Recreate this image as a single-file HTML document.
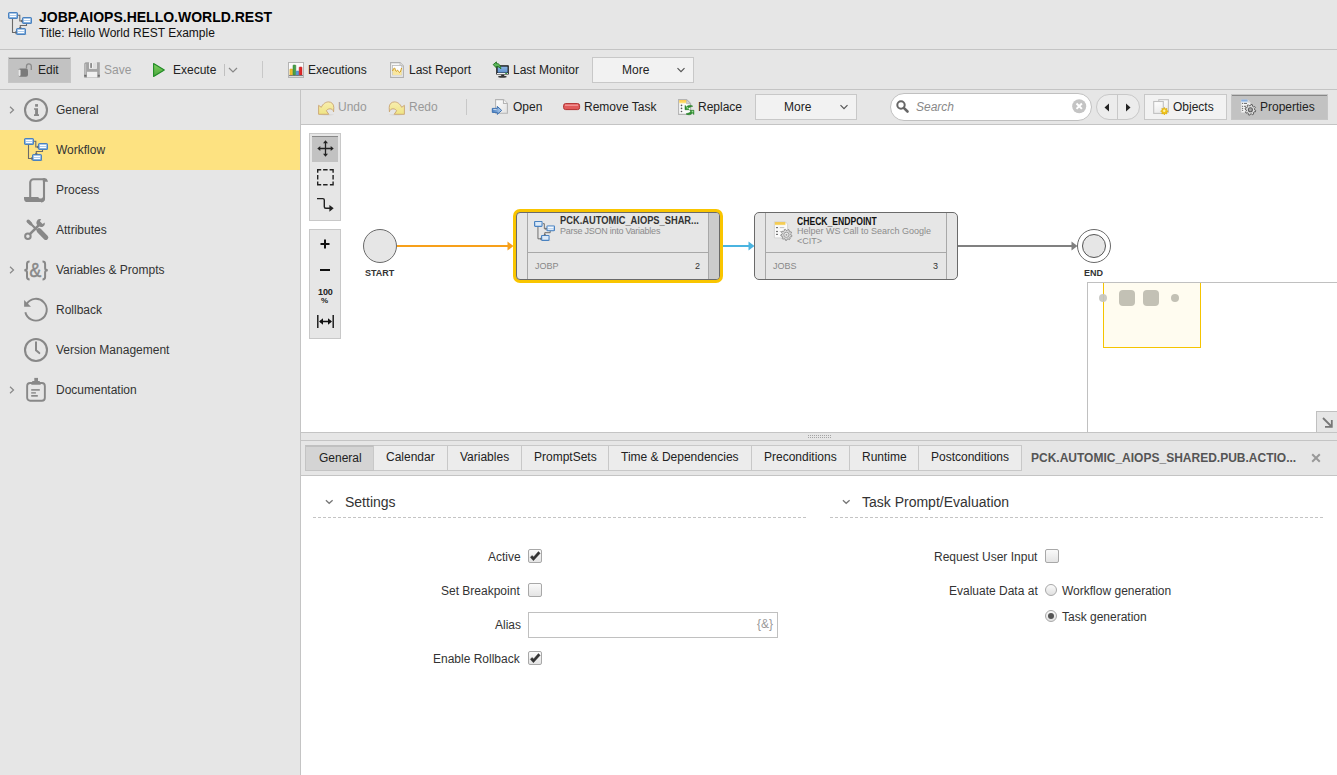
<!DOCTYPE html>
<html><head><meta charset="utf-8">
<style>
*{box-sizing:border-box;margin:0;padding:0}
html,body{width:1337px;height:775px;overflow:hidden;background:#e6e6e6;font-family:"Liberation Sans",sans-serif;font-size:12px;color:#333}
.a{position:absolute}
.t{position:absolute;white-space:nowrap;line-height:1}
svg.i{position:absolute;overflow:visible}
</style></head><body>
<svg width="0" height="0" style="position:absolute">
<defs>
<linearGradient id="bg1" x1="0" y1="0" x2="0" y2="1"><stop offset="0" stop-color="#d2e4f6"/><stop offset="1" stop-color="#8fb8e4"/></linearGradient>
<symbol id="wfbox" viewBox="0 0 10 7"><rect x="0.6" y="0.6" width="8.8" height="5.8" rx="1" fill="url(#bg1)" stroke="#4a82c0" stroke-width="1.2"/><rect x="2" y="2" width="6" height="1" fill="#fff"/><rect x="2" y="4" width="6" height="1" fill="#fff"/></symbol>
<symbol id="wf" viewBox="0 0 24 24">
<path d="M4.5 7v14.5H8.5 M10 4.2H11.8V10H14.5 M18.5 12.5V14.5H12.3V17" fill="none" stroke="#6a6a6a" stroke-width="1.1"/>
<ellipse cx="13" cy="23.3" rx="6" ry="0.7" fill="#000" opacity="0.12"/>
<use href="#wfbox" x="0" y="1" width="10" height="7"/>
<use href="#wfbox" x="14" y="6" width="10" height="7"/>
<use href="#wfbox" x="8" y="17" width="10" height="7"/>
<path d="M14.9 10L13 8.6V11.4Z M12.3 17.9L10.9 16H13.7Z M8.9 21.5L7 20.1V22.9Z" fill="#6a6a6a"/>
</symbol>
</defs></svg>

<!-- HEADER -->
<svg class="i" style="left:8px;top:11px" width="24" height="24"><use href="#wf"/></svg>
<div class="a" style="left:0;top:49px;width:1337px;height:1px;background:#c4c4c4"></div>
<div class="t" style="left:39px;top:10px;font-size:14px;font-weight:bold;color:#000">JOBP.AIOPS.HELLO.WORLD.REST</div>
<div class="t" style="left:39px;top:27px;font-size:12px;color:#111">Title: Hello World REST Example</div>

<!-- TOP TOOLBAR -->
<div class="a" style="left:8px;top:57px;width:63px;height:26px;background:#c2c2c2;border:1px solid #c6c6c6;box-shadow:inset 0 1px 0 #888"></div>
<svg class="i" style="left:17px;top:62px" width="16" height="16" viewBox="0 0 16 16">
<path d="M9.5 6.5V4.2a2.4 2.4 0 0 1 4.8 0V8" fill="none" stroke="#8a8a8a" stroke-width="1.3"/>
<rect x="1.3" y="6.5" width="9.7" height="8.3" rx="2" fill="#7a7a7a"/>
<rect x="1.3" y="7.5" width="2.2" height="6.5" rx="1" fill="#e8e8e8"/>
</svg>
<div class="t" style="left:38px;top:64px;color:#222">Edit</div>
<svg class="i" style="left:84px;top:62px" width="16" height="16" viewBox="0 0 16 16">
<path d="M1.6 0.2H15.8V15.8H0.2V1.6Z" fill="#a4a4a4"/>
<rect x="1" y="2" width="1.2" height="11" fill="#bdbdbd"/>
<rect x="5" y="0.2" width="7.9" height="6.6" fill="#f0f0f0"/>
<rect x="9" y="1" width="3.5" height="5" fill="#dedede"/>
<rect x="6.2" y="1.1" width="1.8" height="4.8" fill="#8a8a8a"/>
<rect x="3" y="9.8" width="10.2" height="5.6" fill="#f0f0f0"/>
<rect x="0.2" y="12.8" width="2.2" height="1.8" fill="#6a6a6a"/>
<rect x="13.8" y="12.8" width="2" height="1.8" fill="#6a6a6a"/>
</svg>
<div class="t" style="left:104px;top:64px;color:#999">Save</div>
<svg class="i" style="left:152px;top:62px" width="14" height="16" viewBox="0 0 14 16">
<defs><linearGradient id="pg" x1="0" y1="0" x2="0" y2="1"><stop offset="0" stop-color="#7fd060"/><stop offset="1" stop-color="#4aa63c"/></linearGradient></defs>
<path d="M1.6 1.5L12.3 8L1.6 14.5Z" fill="url(#pg)" stroke="#1f8a24" stroke-width="1.1" stroke-linejoin="round"/>
</svg>
<div class="t" style="left:173px;top:64px;color:#222">Execute</div>
<div class="a" style="left:224px;top:64px;width:1px;height:12px;background:#c0c0c0"></div>
<svg class="i" style="left:228px;top:67px" width="10" height="6" viewBox="0 0 10 6"><path d="M1 1l4 4 4-4" fill="none" stroke="#888" stroke-width="1.2"/></svg>
<div class="a" style="left:262px;top:61px;width:1px;height:17px;background:#c8c8c8"></div>
<svg class="i" style="left:288px;top:62px" width="16" height="16" viewBox="0 0 16 16">
<rect x="0.5" y="0.5" width="15" height="15" fill="#fafafa" stroke="#b4b4b4" stroke-width="1"/>
<rect x="1.9" y="7" width="2.8" height="6.2" rx="0.6" fill="#f0c030" stroke="#d8a010" stroke-width="0.5"/>
<rect x="5" y="3" width="2.8" height="10.2" rx="0.6" fill="#4aa048" stroke="#2f7e2e" stroke-width="0.5"/>
<rect x="8.1" y="9" width="2.8" height="4.2" rx="0.6" fill="#5a9ad8" stroke="#3a76b8" stroke-width="0.5"/>
<rect x="11.2" y="5" width="2.8" height="8.2" rx="0.6" fill="#e02828" stroke="#b01818" stroke-width="0.5"/>
<rect x="1" y="13.2" width="14" height="1" fill="#666"/>
</svg>
<div class="t" style="left:308px;top:64px;color:#222">Executions</div>
<svg class="i" style="left:390px;top:62px" width="16" height="16" viewBox="0 0 16 16">
<path d="M0.6 0.6H10L13.4 4V15.4H0.6Z" fill="#f6f6f6" stroke="#b0b0b0" stroke-width="1.1"/>
<path d="M10 0.6V4H13.4" fill="#e0e0e0" stroke="#b8b8b8" stroke-width="0.8"/>
<rect x="2.4" y="3.4" width="9.4" height="9.6" fill="#fdfdfd" stroke="#b8b8b8" stroke-width="0.8"/>
<path d="M2.6 9C3.2 7.5 3.8 6 4.4 6C5.2 6 5.5 9.3 6.2 9.3C6.8 9.3 7 8.3 7.6 8.3C8.4 8.3 8.8 10.5 9.6 10.5C10.5 10.5 11 7.5 11.6 6V13H2.6Z" fill="#f8e6a0"/>
<path d="M2.6 9C3.2 7.5 3.8 6 4.4 6C5.2 6 5.5 9.3 6.2 9.3C6.8 9.3 7 8.3 7.6 8.3C8.4 8.3 8.8 10.5 9.6 10.5C10.5 10.5 11 7.5 11.6 6" fill="none" stroke="#d09a18" stroke-width="1"/>
</svg>
<div class="t" style="left:409px;top:64px;color:#222">Last Report</div>
<svg class="i" style="left:489px;top:57px" width="24" height="24" viewBox="0 0 24 24">
<defs><linearGradient id="sg" x1="0" y1="0" x2="0" y2="1"><stop offset="0" stop-color="#8cb6e6"/><stop offset="1" stop-color="#5f90cc"/></linearGradient></defs>
<rect x="7.2" y="8.2" width="12.6" height="9.4" rx="0.6" fill="#151515"/>
<rect x="8.6" y="9.6" width="10" height="6" fill="url(#sg)"/>
<rect x="8" y="16" width="11" height="1" fill="#f0f0f0"/>
<rect x="16.2" y="16" width="2" height="1" fill="#3aa040"/>
<rect x="12.2" y="17.6" width="3" height="1.6" fill="#333"/>
<ellipse cx="13.4" cy="19.7" rx="4.3" ry="1" fill="#3a3a3a"/>
<path d="M4.2 7.6L7.4 4.9V6.5C10 6.5 11.5 8 11.8 11.8C10.8 10.2 9.5 9.6 7.4 9.6V10.9Z" fill="#5cb85a" stroke="#1e6e1e" stroke-width="0.9" stroke-linejoin="round"/>
</svg>
<div class="t" style="left:513px;top:64px;color:#222">Last Monitor</div>
<div class="a" style="left:592px;top:57px;width:102px;height:26px;background:#f2f2f2;border:1px solid #c8c8c8"></div>
<div class="t" style="left:622px;top:64px;color:#222">More</div>
<svg class="i" style="left:676px;top:67px" width="10" height="6" viewBox="0 0 10 6"><path d="M1.5 1.2l3.5 3.5 3.5-3.5" fill="none" stroke="#555" stroke-width="1.2"/></svg>
<div class="a" style="left:0;top:89px;width:1337px;height:1px;background:#c4c4c4"></div>

<!-- SIDEBAR -->
<div class="a" style="left:0;top:130px;width:300px;height:40px;background:#fde281"></div>
<div class="a" style="left:300px;top:90px;width:1px;height:685px;background:#c4c4c4"></div>
<!-- chevrons -->
<svg class="i" style="left:9px;top:106px" width="6" height="8" viewBox="0 0 6 8"><path d="M1 0.8l3.5 3.2L1 7.2" fill="none" stroke="#888" stroke-width="1.2"/></svg>
<svg class="i" style="left:9px;top:266px" width="6" height="8" viewBox="0 0 6 8"><path d="M1 0.8l3.5 3.2L1 7.2" fill="none" stroke="#888" stroke-width="1.2"/></svg>
<svg class="i" style="left:9px;top:386px" width="6" height="8" viewBox="0 0 6 8"><path d="M1 0.8l3.5 3.2L1 7.2" fill="none" stroke="#888" stroke-width="1.2"/></svg>
<!-- icons -->
<svg class="i" style="left:24px;top:98px" width="24" height="24" viewBox="0 0 24 24">
<circle cx="12" cy="12" r="11" fill="none" stroke="#888" stroke-width="2.1"/>
<rect x="11.1" y="6.1" width="2.9" height="2.6" fill="#888"/>
<path d="M10 10.3H14V16.2H15V17.9H10V16.2H11.1V11.7H10Z" fill="#888"/>
</svg>
<svg class="i" style="left:24px;top:137px" width="24" height="24"><use href="#wf"/></svg>
<svg class="i" style="left:24px;top:178px" width="24" height="24" viewBox="0 0 24 24">
<path d="M6.2 19.5V4.6A3.3 3.3 0 0 1 9.5 1.3H21" fill="none" stroke="#888" stroke-width="2.1"/>
<path d="M20 2V20.4A3 3 0 0 1 17 23.4" fill="none" stroke="#888" stroke-width="2.1"/>
<path d="M18.8 0.25H21.2Q23 0.25 24 3.7H18.8Z" fill="#888"/>
<path d="M0 19H14.2A2.6 2.6 0 0 0 19 19H21V20.6A3.4 3.4 0 0 1 17.6 24H3.6A3.6 3.6 0 0 1 0 20.4Z" fill="#888"/>
</svg>
<svg class="i" style="left:24px;top:218px" width="24" height="24" viewBox="0 0 24 24">
<path d="M4.2 3.2L12 11" stroke="#888" stroke-width="2.2" stroke-linecap="round"/>
<path d="M4.2 3.2L6.6 5.6" stroke="#888" stroke-width="3.4" stroke-linecap="round"/>
<path d="M15 12.6L21.8 19.4" stroke="#888" stroke-width="5" stroke-linecap="round"/>
<path d="M5.6 16.4L15.4 6.6" stroke="#888" stroke-width="2.6"/>
<circle cx="3.9" cy="18.2" r="2.75" fill="none" stroke="#888" stroke-width="2"/>
<path d="M14.6 7.6A3.4 3.4 0 0 1 17.2 1.3L15.9 3.3L18.6 6L20.6 4.6A3.4 3.4 0 0 1 14.6 7.6Z" fill="#888"/>
</svg>
<svg class="i" style="left:18px;top:252px" width="40" height="40" viewBox="0 0 40 40">
<path d="M11.6 9.6C9.8 9.6 9 10.3 9 12V16C9 17.3 8 18.2 6.3 18.2C8 18.2 9 19.1 9 20.4V25C9 26.7 9.8 27.4 11.6 27.4" fill="none" stroke="#888" stroke-width="2"/>
<path d="M24.5 9.6C26.3 9.6 27.1 10.3 27.1 12V16C27.1 17.3 28.1 18.2 29.8 18.2C28.1 18.2 27.1 19.1 27.1 20.4V25C27.1 26.7 26.3 27.4 24.5 27.4" fill="none" stroke="#888" stroke-width="2"/>
<text x="0" y="0" transform="translate(11.6 24.8) scale(0.88 1)" font-family="Liberation Sans" font-size="20" fill="#888" stroke="#888" stroke-width="0.5">&amp;</text>
</svg>
<svg class="i" style="left:24px;top:298px" width="24" height="24" viewBox="0 0 24 24">
<path d="M1.34 14.2A10.85 10.85 0 1 0 2.7 5.95" fill="none" stroke="#888" stroke-width="1.95"/>
<path d="M0.1 1.9V8.8H7Z" fill="#888"/>
</svg>
<svg class="i" style="left:24px;top:338px" width="24" height="24" viewBox="0 0 24 24">
<circle cx="12" cy="12" r="11" fill="none" stroke="#888" stroke-width="2.1"/>
<path d="M12 4.3V12.3L15.3 15.1" fill="none" stroke="#888" stroke-width="2" stroke-linecap="round"/>
</svg>
<svg class="i" style="left:24px;top:378px" width="24" height="24" viewBox="0 0 24 24">
<rect x="3.15" y="5.05" width="17.7" height="17.7" rx="3" fill="none" stroke="#888" stroke-width="1.9"/>
<rect x="10.3" y="-0.1" width="3.7" height="3.4" fill="#888"/>
<path d="M7.2 6.7L8.4 3H15.6L16.8 6.7Z" fill="#888"/>
<rect x="7.2" y="11.1" width="8.6" height="1.6" fill="#888"/>
<rect x="7.2" y="14.2" width="4.7" height="1.4" fill="#888"/>
<rect x="7.2" y="17" width="6.6" height="1.7" fill="#888"/>
</svg>
<div class="t" style="left:56px;top:104px">General</div>
<div class="t" style="left:56px;top:144px">Workflow</div>
<div class="t" style="left:56px;top:184px">Process</div>
<div class="t" style="left:56px;top:224px">Attributes</div>
<div class="t" style="left:56px;top:264px">Variables &amp; Prompts</div>
<div class="t" style="left:56px;top:304px">Rollback</div>
<div class="t" style="left:56px;top:344px">Version Management</div>
<div class="t" style="left:56px;top:384px">Documentation</div>

<!-- RIGHT TOOLBAR -->
<svg class="i" style="left:314px;top:96px" width="24" height="24" viewBox="0 0 24 24">
<defs><linearGradient id="yg" x1="0" y1="0" x2="0" y2="1"><stop offset="0" stop-color="#f8eeb0"/><stop offset="1" stop-color="#efe483"/></linearGradient></defs>
<ellipse cx="13" cy="18.8" rx="7" ry="0.8" fill="#000" opacity="0.06"/>
<path d="M4.6 9.3L7.3 11.3C9 7.5 12 5.9 14.6 5.9C17.5 5.9 19.8 8 19.8 11.5L19.6 15.8C19 13.5 17.5 12.8 16 12.8C14.2 12.8 12.8 13.8 12.4 14.8L14.8 18.3H4.6Z" fill="url(#yg)" stroke="#c9a472" stroke-width="0.9" stroke-linejoin="round"/>
</svg>
<div class="t" style="left:338px;top:101px;color:#999">Undo</div>
<svg class="i" style="left:385px;top:96px" width="24" height="24" viewBox="0 0 24 24">
<ellipse cx="11" cy="18.8" rx="7" ry="0.8" fill="#000" opacity="0.06"/>
<path d="M19.4 9.3L16.7 11.3C15 7.5 12 5.9 9.4 5.9C6.5 5.9 4.2 8 4.2 11.5L4.4 15.8C5 13.5 6.5 12.8 8 12.8C9.8 12.8 11.2 13.8 11.6 14.8L9.2 18.3H19.4Z" fill="url(#yg)" stroke="#c9a472" stroke-width="0.9" stroke-linejoin="round"/>
</svg>
<div class="t" style="left:409px;top:101px;color:#999">Redo</div>
<div class="a" style="left:466px;top:99px;width:1px;height:16px;background:#c8c8c8"></div>
<svg class="i" style="left:488px;top:96px" width="24" height="24" viewBox="0 0 24 24">
<defs><linearGradient id="dg" x1="0" y1="0" x2="1" y2="1"><stop offset="0" stop-color="#fff"/><stop offset="1" stop-color="#e2e2e2"/></linearGradient>
<linearGradient id="ag" x1="0" y1="0" x2="1" y2="0"><stop offset="0" stop-color="#4a80c2"/><stop offset="1" stop-color="#b4d0ee"/></linearGradient></defs>
<path d="M7.6 3.6H15.5L19.4 7.5V17.2H7.6Z" fill="url(#dg)" stroke="#b4b4b4" stroke-width="1.1"/>
<path d="M15.5 3.6V7.5H19.4" fill="#f4f4f4" stroke="#b4b4b4" stroke-width="1.1"/>
<path d="M4.3 12.4H9.3V10.4L13.7 14.4L9.3 18.4V16.4H4.3Z" fill="url(#ag)" stroke="#3c70b0" stroke-width="1" stroke-linejoin="round"/>
<path d="M5.3 13.4H8.5" stroke="#e8f0fa" stroke-width="0.8"/>
</svg>
<div class="t" style="left:513px;top:101px;color:#222">Open</div>
<svg class="i" style="left:563px;top:103px" width="18" height="8" viewBox="0 0 18 8">
<rect x="0.6" y="0.6" width="16" height="6" rx="2" fill="#e05a5a" stroke="#b03030" stroke-width="1"/>
<rect x="2" y="1.5" width="13" height="1.5" fill="#f29090"/>
</svg>
<div class="t" style="left:584px;top:101px;color:#222">Remove Task</div>
<svg class="i" style="left:670px;top:96px" width="30" height="24" viewBox="0 0 30 24">
<defs><linearGradient id="yh" x1="0" y1="0" x2="0" y2="1"><stop offset="0" stop-color="#ffc43a"/><stop offset="1" stop-color="#ffe88a"/></linearGradient></defs>
<path d="M8.6 3.6H16.5L20.6 7.6V18.4H8.6Z" fill="#fafafa" stroke="#b4b4b4" stroke-width="1.1"/>
<path d="M16.5 3.6L20.6 7.6H16.5Z" fill="#d0d0d0" stroke="#b4b4b4" stroke-width="0.8"/>
<rect x="9.2" y="4.1" width="7" height="3.2" fill="url(#yh)"/>
<circle cx="11.5" cy="9.4" r="0.8" fill="#555"/><circle cx="11.5" cy="12.4" r="0.8" fill="#555"/><circle cx="11.5" cy="15.5" r="0.8" fill="#555"/>
<path d="M22.8 10.2C20.3 8.4 17.6 9.3 16.6 10.9L15 9.4V13.7H19.2L17.9 12.5C18.9 11.2 20.9 10.9 22.8 10.2Z" fill="#2f8f30" stroke="#237a24" stroke-width="0.5"/>
<path d="M16 17.9C18.5 19.6 21.3 18.7 22.3 17.1L23.9 18.6V14.3H19.7L21 15.5C20 16.8 18 17.1 16 17.9Z" fill="#2f8f30" stroke="#237a24" stroke-width="0.5"/>
<circle cx="17.3" cy="11.8" r="0.9" fill="#9fe09a"/><circle cx="22.5" cy="15.6" r="0.9" fill="#9fe09a"/>
</svg>
<div class="t" style="left:698px;top:101px;color:#222">Replace</div>
<div class="a" style="left:755px;top:94px;width:102px;height:26px;background:#f2f2f2;border:1px solid #c8c8c8"></div>
<div class="t" style="left:784px;top:101px;color:#222">More</div>
<svg class="i" style="left:839px;top:104px" width="10" height="6" viewBox="0 0 10 6"><path d="M1.5 1.2l3.5 3.5 3.5-3.5" fill="none" stroke="#555" stroke-width="1.2"/></svg>
<div class="a" style="left:890px;top:93px;width:202px;height:28px;background:#fff;border:1px solid #c0c0c0;border-radius:14px"></div>
<svg class="i" style="left:896px;top:100px" width="14" height="13" viewBox="0 0 14 13">
<circle cx="5" cy="5" r="3.7" fill="none" stroke="#666" stroke-width="2"/>
<path d="M7.8 7.8L11.5 11.5" stroke="#666" stroke-width="2.6" stroke-linecap="round"/>
</svg>
<div class="t" style="left:916px;top:101px;color:#888;font-style:italic">Search</div>
<svg class="i" style="left:1072px;top:99px" width="15" height="15" viewBox="0 0 15 15">
<circle cx="7.2" cy="7.2" r="7" fill="#c4c4c4"/>
<path d="M4.5 4.5l5.4 5.4M9.9 4.5l-5.4 5.4" stroke="#fff" stroke-width="2"/>
</svg>
<div class="a" style="left:1096px;top:94px;width:44px;height:26px;background:#ececec;border:1px solid #c8c8c8;border-radius:13px"></div>
<div class="a" style="left:1117px;top:95px;width:1px;height:24px;background:#c8c8c8"></div>
<svg class="i" style="left:1104px;top:103px" width="6" height="9" viewBox="0 0 6 9"><path d="M5 0.5v8L0.5 4.5z" fill="#222"/></svg>
<svg class="i" style="left:1125px;top:103px" width="6" height="9" viewBox="0 0 6 9"><path d="M1 0.5v8L5.5 4.5z" fill="#222"/></svg>
<div class="a" style="left:1144px;top:94px;width:83px;height:26px;background:#f2f2f2;border:1px solid #c8c8c8"></div>
<svg class="i" style="left:1148px;top:96px" width="24" height="24" viewBox="0 0 24 24">
<defs><linearGradient id="og" x1="0" y1="0" x2="0.3" y2="1"><stop offset="0" stop-color="#fff"/><stop offset="1" stop-color="#ececec"/></linearGradient></defs>
<rect x="10.8" y="3.7" width="9.6" height="12.5" fill="url(#og)" stroke="#c0c0c0" stroke-width="1.1"/>
<rect x="5.7" y="5.5" width="9.6" height="11.9" fill="url(#og)" stroke="#c0c0c0" stroke-width="1.1"/>
<path d="M16.4 11.4L17.2 13L19 12.4L18.6 14.2L20.2 15.2L18.6 16.1L19 17.9L17.2 17.4L16.4 19L15.6 17.4L13.8 17.9L14.2 16.1L12.6 15.2L14.2 14.2L13.8 12.4L15.6 13Z" fill="#f2c418" stroke="#d8a800" stroke-width="0.6" stroke-linejoin="round"/>
<circle cx="16.2" cy="14.8" r="1.2" fill="#fff3a0"/>
</svg>
<div class="t" style="left:1173px;top:101px;color:#222">Objects</div>
<div class="a" style="left:1231px;top:94px;width:97px;height:26px;background:#c2c2c2;border:1px solid #c6c6c6;box-shadow:inset 0 1px 0 #888"></div>
<svg class="i" style="left:1236px;top:96px" width="24" height="24" viewBox="0 0 24 24">
<defs><linearGradient id="pb" x1="0" y1="0" x2="0" y2="1"><stop offset="0" stop-color="#6a9ad8"/><stop offset="1" stop-color="#d0e2f6"/></linearGradient></defs>
<path d="M5.2 3.6H11.6L14.2 6.2V16.4H5.2Z" fill="#f6f6f6" stroke="#d4d4d4" stroke-width="0.6"/>
<path d="M11.6 3.6V6.2H14.2" fill="#ddd" stroke="#bbb" stroke-width="0.5"/>
<rect x="5.2" y="3.6" width="6.4" height="2.8" fill="url(#pb)"/>
<path d="M6 7.4h1.2M8 7.4h3M6 10.3h1.2M8 10.3h2M6 12.4h1.2M6 14.3h1.2" stroke="#555" stroke-width="0.9"/>
<path d="M18.60 13.80 L19.76 14.43 L19.39 15.87 L18.06 15.85 L17.37 16.77 L17.74 18.04 L16.47 18.79 L15.54 17.84 L14.40 18.00 L13.77 19.16 L12.33 18.79 L12.35 17.46 L11.43 16.77 L10.16 17.14 L9.41 15.87 L10.36 14.94 L10.20 13.80 L9.04 13.17 L9.41 11.73 L10.74 11.75 L11.43 10.83 L11.06 9.56 L12.33 8.81 L13.26 9.76 L14.40 9.60 L15.03 8.44 L16.47 8.81 L16.45 10.14 L17.37 10.83 L18.64 10.46 L19.39 11.73 L18.44 12.66Z" fill="#dcdcdc" stroke="#5e5e5e" stroke-width="1" stroke-linejoin="round"/>
<circle cx="14.4" cy="13.8" r="2" fill="#a8a8a8" stroke="#5e5e5e" stroke-width="1.1"/>
</svg>
<div class="t" style="left:1260px;top:101px;color:#222">Properties</div>
<div class="a" style="left:301px;top:124px;width:1036px;height:1px;background:#c4c4c4"></div>


<!-- CANVAS -->
<div class="a" style="left:301px;top:125px;width:1036px;height:307px;background:#fff"></div>
<!-- palette 1 -->
<div class="a" style="left:309px;top:133px;width:32px;height:88px;background:#e6e6e6;border:1px solid #c8c8c8"></div>
<div class="a" style="left:312px;top:136px;width:26px;height:26px;background:#c2c2c2;box-shadow:inset 0 1px 0 #888"></div>
<svg class="i" style="left:317px;top:140px" width="17" height="17" viewBox="0 0 17 17">
<path d="M8.5 2v13M2 8.5h13" stroke="#222" stroke-width="1.3"/>
<path d="M8.5 0.3L6 3.3h5zM8.5 16.7L6 13.7h5zM0.3 8.5L3.3 6v5zM16.7 8.5L13.7 6v5z" fill="#222"/>
</svg>

<svg class="i" style="left:312px;top:164px" width="26" height="52" viewBox="0 0 26 52">
<path d="M5.7 8.7V5.7H9.2M11.1 5.7H15.6M17.6 5.7H21.1V8.7M21.1 10.9V15.5M21.1 17.6V20.8H17.9M15.6 20.8H11.1M9.2 20.8H5.7V17.6M5.7 15.5V10.9" fill="none" stroke="#222" stroke-width="1.4"/>
<path d="M5 34.6H10.8Q12.3 34.6 12.3 36.1V42.8Q12.3 44.3 13.8 44.3H18" fill="none" stroke="#222" stroke-width="1.4"/>
<path d="M21.7 44.3L17.4 40.9V47.7Z" fill="#222"/>
</svg>
<!-- palette 2 -->
<div class="a" style="left:309px;top:229px;width:32px;height:110px;background:#e6e6e6;border:1px solid #c8c8c8"></div>
<svg class="i" style="left:319px;top:238px" width="12" height="12" viewBox="0 0 12 12"><path d="M6 1.5v9M1.5 6h9" stroke="#111" stroke-width="2"/></svg>
<svg class="i" style="left:319px;top:264px" width="12" height="12" viewBox="0 0 12 12"><path d="M1 6h10" stroke="#111" stroke-width="2"/></svg>
<div class="t" style="left:318px;top:288px;font-size:9px;font-weight:bold;color:#222;letter-spacing:-0.1px">100</div>
<div class="t" style="left:321px;top:297px;font-size:8px;font-weight:bold;color:#222">%</div>
<svg class="i" style="left:317px;top:315px" width="17" height="13" viewBox="0 0 17 13">
<path d="M0.8 0v13M16.2 0v13M3 6.5h11" stroke="#111" stroke-width="1.4"/>
<path d="M2 6.5L6 3.3v6.4zM15 6.5L11 3.3v6.4z" fill="#111"/>
</svg>

<!-- edges -->
<div class="a" style="left:397px;top:245px;width:112px;height:2px;background:#f7a01a"></div>
<svg class="i" style="left:507px;top:241px" width="7" height="10" viewBox="0 0 7 10"><path d="M0.5 0.5L6.5 5L0.5 9.5z" fill="#f7a01a"/></svg>
<div class="a" style="left:723px;top:245px;width:27px;height:2px;background:#4ab4e0"></div>
<svg class="i" style="left:748px;top:241px" width="7" height="10" viewBox="0 0 7 10"><path d="M0.5 0.5L6.5 5L0.5 9.5z" fill="#4ab4e0"/></svg>
<div class="a" style="left:958px;top:245px;width:115px;height:2px;background:#808080"></div>
<svg class="i" style="left:1071px;top:241px" width="7" height="10" viewBox="0 0 7 10"><path d="M0.5 0.5L6.5 5L0.5 9.5z" fill="#808080"/></svg>

<!-- START -->
<div class="a" style="left:363px;top:229px;width:34px;height:34px;border-radius:50%;background:#e6e6e6;border:1px solid #6a6a6a"></div>
<div class="t" style="left:365px;top:269px;font-size:9px;font-weight:bold;color:#333">START</div>
<!-- END -->
<div class="a" style="left:1077px;top:229px;width:34px;height:34px;border-radius:50%;background:#fff;border:1px solid #6a6a6a"></div>
<div class="a" style="left:1082px;top:234px;width:24px;height:24px;border-radius:50%;background:#e6e6e6;border:1.5px solid #555"></div>
<div class="t" style="left:1084px;top:269px;font-size:9px;font-weight:bold;color:#333">END</div>

<!-- NODE 1 -->
<div class="a" style="left:513px;top:209px;width:210px;height:74px;border-radius:7px;background:#f9c500"></div>
<div class="a" style="left:516px;top:212px;width:204px;height:68px;border-radius:4px;background:#e6e6e6;border:1px solid #6a6a6a;overflow:hidden">
  <div class="a" style="left:10px;top:0;width:1px;height:66px;background:#a8a8a8"></div>
  <div class="a" style="left:191px;top:0;width:12px;height:66px;background:#cccccc;border-left:1px solid #a8a8a8"></div>
  <div class="a" style="left:11px;top:39px;width:180px;height:1px;background:#a8a8a8"></div>
</div>
<svg class="i" style="left:534px;top:219.5px" width="21" height="21" viewBox="0 0 24 24"><use href="#wf"/></svg>
<div class="t" style="left:560px;top:216px;font-size:10px;font-weight:bold;color:#333;transform:scaleX(0.93);transform-origin:0 0">PCK.AUTOMIC_AIOPS_SHAR...</div>
<div class="t" style="left:560px;top:227px;font-size:9px;color:#8c8c8c;letter-spacing:-0.25px">Parse JSON into Variables</div>
<div class="t" style="left:535px;top:262px;font-size:9px;color:#888">JOBP</div>
<div class="t" style="left:695px;top:262px;font-size:9px;color:#333">2</div>

<!-- NODE 2 -->
<div class="a" style="left:754px;top:212px;width:204px;height:68px;border-radius:5px;background:#e6e6e6;border:1px solid #6a6a6a;overflow:hidden">
  <div class="a" style="left:10px;top:0;width:1px;height:66px;background:#a8a8a8"></div>
  <div class="a" style="left:191px;top:0;width:1px;height:66px;background:#a8a8a8"></div>
  <div class="a" style="left:11px;top:39px;width:180px;height:1px;background:#a8a8a8"></div>
</div>
<svg class="i" style="left:768px;top:216px" width="28" height="28" viewBox="0 0 28 28">
<defs><linearGradient id="yh2" x1="0" y1="0" x2="0" y2="1"><stop offset="0" stop-color="#f2c030"/><stop offset="1" stop-color="#f8dc80"/></linearGradient></defs>
<path d="M6.4 5.9H17.4L19.6 8.1V21.9H6.4Z" fill="#fafafa" stroke="#c8c8c8" stroke-width="0.7"/>
<rect x="6.8" y="6.2" width="10.6" height="2.9" fill="url(#yh2)"/>
<rect x="8.1" y="11" width="1.8" height="1.2" fill="#666"/><rect x="8.1" y="14.9" width="1.8" height="1.2" fill="#666"/><rect x="8.1" y="17.8" width="1.8" height="1.2" fill="#666"/>
<path d="M11.8 11.6h4.5M11.8 15.5h2.5" stroke="#aaa" stroke-width="0.7"/>
<path d="M22.80 18.80 L23.96 19.50 L23.66 20.72 L22.31 20.81 L21.77 21.63 L22.20 22.91 L21.20 23.65 L20.11 22.86 L19.16 23.13 L18.67 24.39 L17.43 24.31 L17.10 23.00 L16.20 22.61 L15.01 23.26 L14.11 22.40 L14.70 21.18 L14.27 20.30 L12.94 20.04 L12.80 18.80 L14.03 18.25 L14.27 17.30 L13.42 16.24 L14.11 15.20 L15.41 15.57 L16.20 14.99 L16.23 13.64 L17.43 13.29 L18.19 14.41 L19.16 14.47 L20.06 13.45 L21.20 13.95 L21.06 15.30 L21.77 15.97 L23.11 15.77 L23.66 16.88 L22.69 17.83Z" fill="#d8d8d8" stroke="#8a8a8a" stroke-width="0.9" stroke-linejoin="round"/>
<circle cx="18.4" cy="18.8" r="2.6" fill="#e8e8e8" stroke="#999" stroke-width="0.9"/>
<circle cx="18.4" cy="18.8" r="0.9" fill="#999"/>
</svg>
<div class="t" style="left:797px;top:217px;font-size:10px;font-weight:bold;color:#111;transform:scaleX(0.86);transform-origin:0 0">CHECK_ENDPOINT</div>
<div class="t" style="left:797px;top:227px;font-size:9px;color:#8c8c8c">Helper WS Call to Search Google</div>
<div class="t" style="left:797px;top:237px;font-size:9px;color:#8c8c8c">&lt;CIT&gt;</div>
<div class="t" style="left:773px;top:262px;font-size:9px;color:#888">JOBS</div>
<div class="t" style="left:933px;top:262px;font-size:9px;color:#333">3</div>

<!-- NAVIGATOR -->
<div class="a" style="left:1087px;top:282px;width:250px;height:150px;background:#fff;border-left:1px solid #c0c0c0;border-top:1px solid #c0c0c0"></div>
<div class="a" style="left:1103px;top:283px;width:98px;height:65px;background:#fffcf0;border:1px solid #f5c400;border-top:none"></div>
<div class="a" style="left:1099px;top:294px;width:8px;height:8px;border-radius:50%;background:#c4c4c0;opacity:.9"></div>
<div class="a" style="left:1119px;top:290px;width:16px;height:16px;border-radius:4px;background:#c3c1b5"></div>
<div class="a" style="left:1143px;top:290px;width:16px;height:16px;border-radius:4px;background:#c3c1b5"></div>
<div class="a" style="left:1171px;top:294px;width:8px;height:8px;border-radius:50%;background:#c3c1b5"></div>
<div class="a" style="left:1316px;top:411px;width:21px;height:22px;background:#e6e6e6;border-left:1px solid #c0c0c0;border-top:1px solid #c0c0c0"></div>
<svg class="i" style="left:1322px;top:417px" width="11" height="11" viewBox="0 0 11 11">
<path d="M1 1L9 9" stroke="#777" stroke-width="1.8"/>
<path d="M3 9.8H9.8V3" fill="none" stroke="#777" stroke-width="1.8"/>
</svg>


<!-- SPLITTER + TABS -->
<div class="a" style="left:301px;top:432px;width:1036px;height:1px;background:#c4c4c4"></div>
<div class="a" style="left:301px;top:433px;width:1036px;height:7px;background:#e6e6e6"></div>
<svg class="i" style="left:808px;top:435px" width="24" height="3" fill="#a4a4a4"><rect x="0" y="0" width="1" height="1"/><rect x="0" y="2" width="1" height="1"/><rect x="2" y="0" width="1" height="1"/><rect x="2" y="2" width="1" height="1"/><rect x="4" y="0" width="1" height="1"/><rect x="4" y="2" width="1" height="1"/><rect x="6" y="0" width="1" height="1"/><rect x="6" y="2" width="1" height="1"/><rect x="8" y="0" width="1" height="1"/><rect x="8" y="2" width="1" height="1"/><rect x="10" y="0" width="1" height="1"/><rect x="10" y="2" width="1" height="1"/><rect x="12" y="0" width="1" height="1"/><rect x="12" y="2" width="1" height="1"/><rect x="14" y="0" width="1" height="1"/><rect x="14" y="2" width="1" height="1"/><rect x="16" y="0" width="1" height="1"/><rect x="16" y="2" width="1" height="1"/><rect x="18" y="0" width="1" height="1"/><rect x="18" y="2" width="1" height="1"/><rect x="20" y="0" width="1" height="1"/><rect x="20" y="2" width="1" height="1"/><rect x="22" y="0" width="1" height="1"/><rect x="22" y="2" width="1" height="1"/></svg>
<div class="a" style="left:301px;top:440px;width:1036px;height:1px;background:#c4c4c4"></div>
<div class="a" style="left:301px;top:441px;width:1036px;height:34px;background:#e6e6e6"></div>
<div class="a" style="left:305px;top:445px;width:717px;height:26px;background:#ececec;border:1px solid #c8c8c8"></div>
<div class="a" style="left:305px;top:445px;width:69px;height:26px;background:#d4d4d4;border:1px solid #c4c4c4;border-top:2px solid #c0c0c0"></div>
<div class="a" style="left:373px;top:446px;width:1px;height:24px;background:#c8c8c8"></div>
<div class="a" style="left:447px;top:446px;width:1px;height:24px;background:#c8c8c8"></div>
<div class="a" style="left:521px;top:446px;width:1px;height:24px;background:#c8c8c8"></div>
<div class="a" style="left:608px;top:446px;width:1px;height:24px;background:#c8c8c8"></div>
<div class="a" style="left:751px;top:446px;width:1px;height:24px;background:#c8c8c8"></div>
<div class="a" style="left:849px;top:446px;width:1px;height:24px;background:#c8c8c8"></div>
<div class="a" style="left:918px;top:446px;width:1px;height:24px;background:#c8c8c8"></div>
<div class="t" style="left:319px;top:452px;color:#222">General</div>
<div class="t" style="left:386px;top:451px;color:#222">Calendar</div>
<div class="t" style="left:460px;top:451px;color:#222">Variables</div>
<div class="t" style="left:534px;top:451px;color:#222">PromptSets</div>
<div class="t" style="left:621px;top:451px;color:#222">Time &amp; Dependencies</div>
<div class="t" style="left:764px;top:451px;color:#222">Preconditions</div>
<div class="t" style="left:862px;top:451px;color:#222">Runtime</div>
<div class="t" style="left:931px;top:451px;color:#222">Postconditions</div>
<div class="t" style="left:1031px;top:452px;color:#555;font-weight:bold">PCK.AUTOMIC_AIOPS_SHARED.PUB.ACTIO...</div>
<svg class="i" style="left:1311px;top:453px" width="10" height="10" viewBox="0 0 10 10"><path d="M1.2 1.2l7.6 7.6M8.8 1.2l-7.6 7.6" stroke="#999" stroke-width="2"/></svg>
<div class="a" style="left:301px;top:475px;width:1036px;height:1px;background:#c4c4c4"></div>
<div class="a" style="left:301px;top:476px;width:1036px;height:299px;background:#fff"></div>


<!-- FORM -->
<svg class="i" style="left:325px;top:499px" width="9" height="6" viewBox="0 0 9 6"><path d="M0.9 1.3L4.2 4.3L7.6 1.3" fill="none" stroke="#777" stroke-width="1.3"/></svg>
<div class="t" style="left:345px;top:495px;font-size:14px;color:#333">Settings</div>
<div class="a" style="left:313px;top:517px;width:494px;height:1px;background-image:linear-gradient(90deg,#c4c4c4 3px,transparent 3px);background-size:5px 1px"></div>
<svg class="i" style="left:842px;top:499px" width="9" height="6" viewBox="0 0 9 6"><path d="M0.9 1.3L4.2 4.3L7.6 1.3" fill="none" stroke="#777" stroke-width="1.3"/></svg>
<div class="t" style="left:862px;top:495px;font-size:14px;color:#333">Task Prompt/Evaluation</div>
<div class="a" style="left:830px;top:517px;width:493px;height:1px;background-image:linear-gradient(90deg,#c4c4c4 3px,transparent 3px);background-size:5px 1px"></div>

<div class="t" style="left:488px;top:551px;color:#333">Active</div>
<div class="t" style="left:441px;top:585px;color:#333">Set Breakpoint</div>
<div class="t" style="left:495px;top:619px;color:#333">Alias</div>
<div class="t" style="left:433px;top:653px;color:#333">Enable Rollback</div>

<div class="a" style="left:528px;top:549px;width:14px;height:14px;border:1px solid #a8a8a8;border-radius:2px;background:linear-gradient(#fafafa,#e4e4e4)"></div>
<svg class="i" style="left:524px;top:545px" width="24" height="24" viewBox="0 0 24 24"><path d="M6.3 12.3L8.1 10.4L9.6 12L14.4 6.5L16.2 8.3L9.4 15.7Z" fill="#333" stroke="#333" stroke-width="0.4" stroke-linejoin="round"/></svg>
<div class="a" style="left:528px;top:583px;width:14px;height:14px;border:1px solid #a8a8a8;border-radius:2px;background:linear-gradient(#fafafa,#e4e4e4)"></div>
<div class="a" style="left:528px;top:612px;width:250px;height:26px;border:1px solid #c0c0c0;background:#fff"></div>
<div class="t" style="left:757px;top:618px;font-size:12px;color:#999">{&amp;}</div>
<div class="a" style="left:528px;top:651px;width:14px;height:14px;border:1px solid #a8a8a8;border-radius:2px;background:linear-gradient(#fafafa,#e4e4e4)"></div>
<svg class="i" style="left:524px;top:647px" width="24" height="24" viewBox="0 0 24 24"><path d="M6.3 12.3L8.1 10.4L9.6 12L14.4 6.5L16.2 8.3L9.4 15.7Z" fill="#333" stroke="#333" stroke-width="0.4" stroke-linejoin="round"/></svg>

<div class="t" style="left:934px;top:551px;color:#333">Request User Input</div>
<div class="a" style="left:1045px;top:549px;width:14px;height:14px;border:1px solid #a8a8a8;border-radius:2px;background:linear-gradient(#fafafa,#e4e4e4)"></div>
<div class="t" style="left:949px;top:585px;color:#333">Evaluate Data at</div>
<div class="a" style="left:1045px;top:584px;width:12px;height:12px;border:1px solid #a8a8a8;border-radius:50%;background:linear-gradient(#fafafa,#e0e0e0)"></div>
<div class="t" style="left:1062px;top:585px;color:#333">Workflow generation</div>
<div class="a" style="left:1045px;top:610px;width:12px;height:12px;border:1px solid #a8a8a8;border-radius:50%;background:linear-gradient(#fafafa,#e0e0e0)"></div>
<div class="a" style="left:1048px;top:613px;width:6px;height:6px;border-radius:50%;background:#555"></div>
<div class="t" style="left:1062px;top:611px;color:#333">Task generation</div>


</body></html>
